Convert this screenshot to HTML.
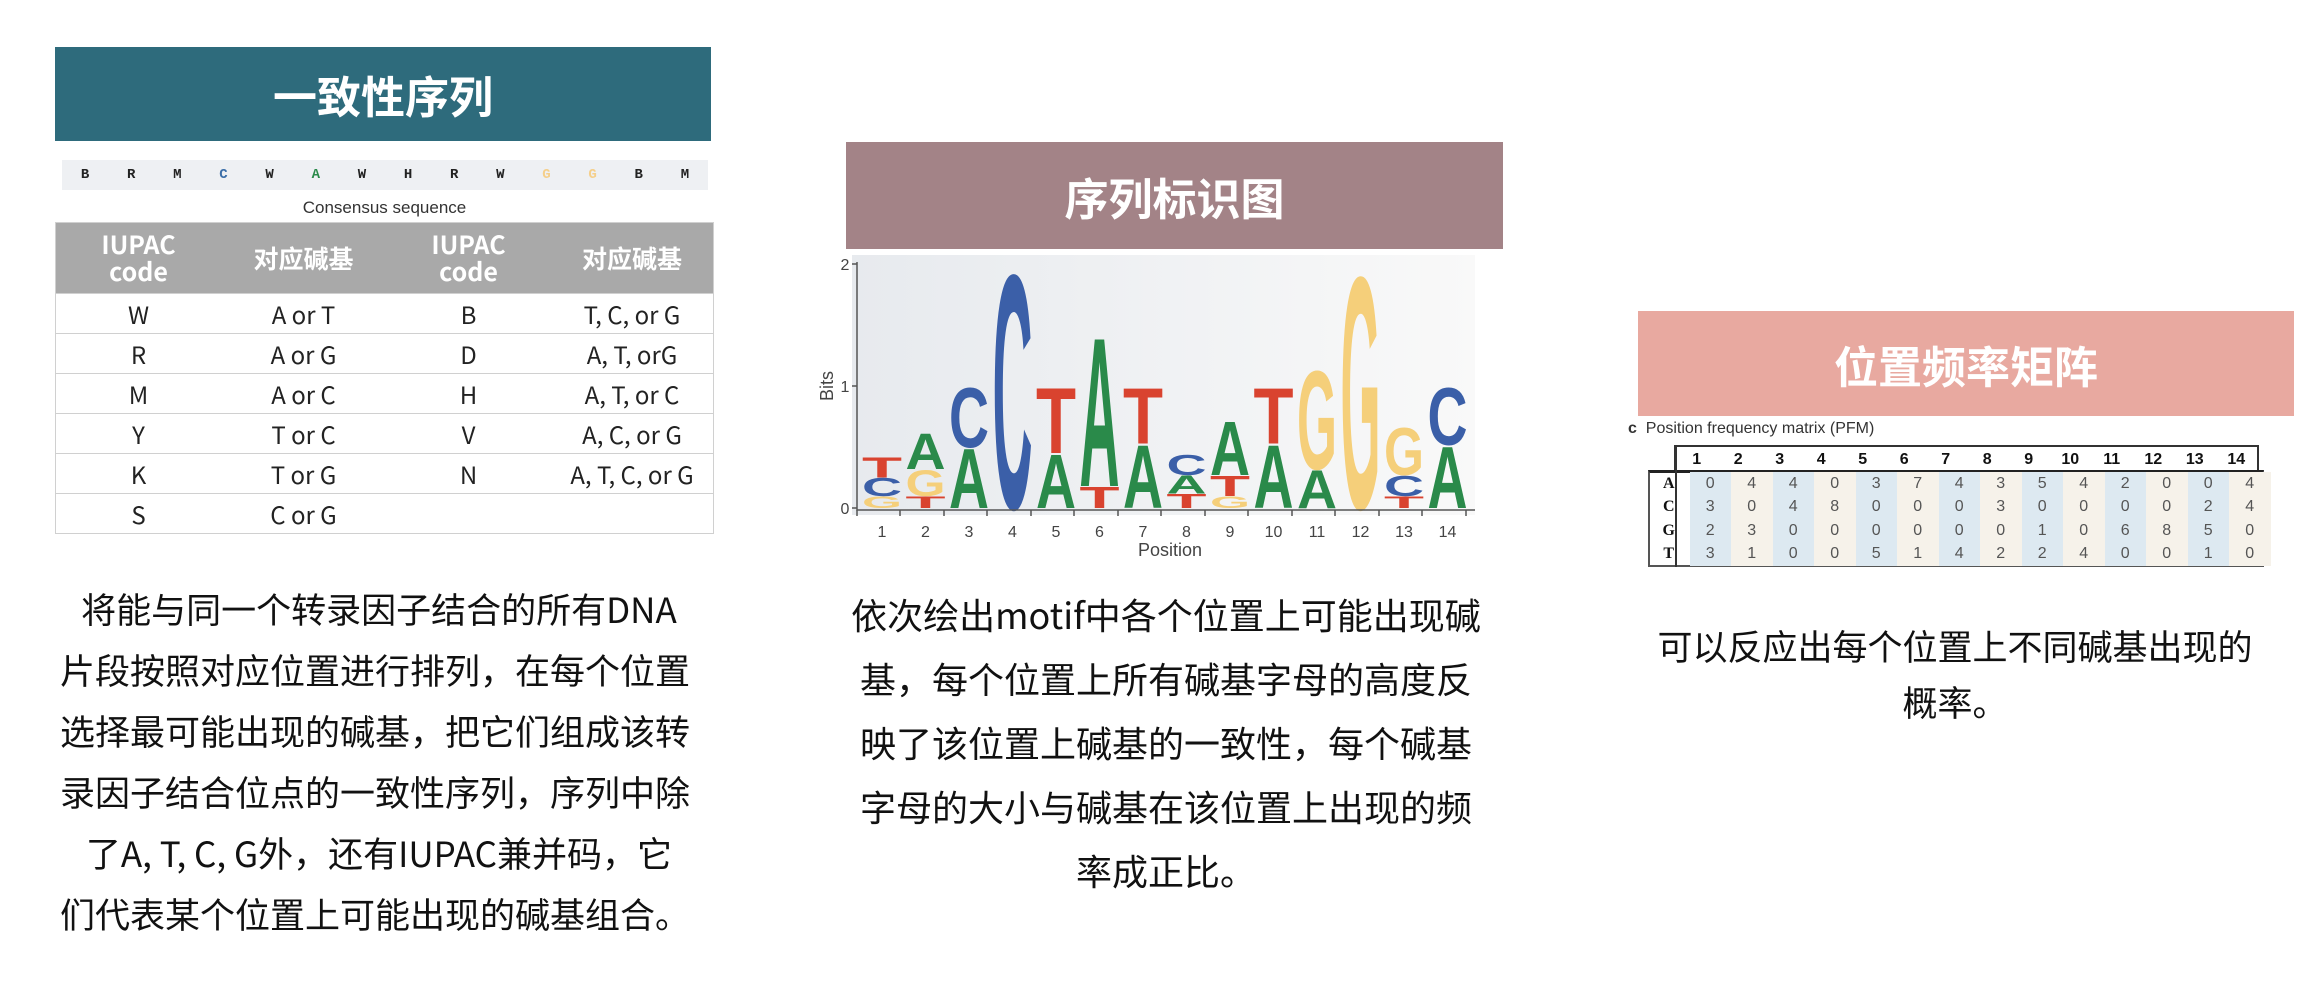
<!DOCTYPE html>
<html><head><meta charset="utf-8"><style>
body{margin:0;width:2324px;height:986px;background:#fff;position:relative;overflow:hidden;font-family:"Liberation Sans","Noto Sans CJK SC",sans-serif;}
.abs{position:absolute;}
.hdr{position:absolute;color:#fff;font-weight:bold;font-size:44px;display:flex;align-items:center;justify-content:center;font-family:"Noto Sans CJK SC",sans-serif;}
.para{position:absolute;font-family:"Noto Sans CJK SC",sans-serif;font-size:36px;color:#111;text-align:center;white-space:nowrap;}
table.iu{position:absolute;left:55px;top:222px;width:659px;border-collapse:collapse;font-family:"Noto Sans CJK SC",sans-serif;}
table.iu th{background:#a9a9a9;color:#fff;font-weight:bold;font-size:25px;line-height:27px;height:70px;padding:0;}
table.iu td{height:39px;border:1px solid #d0d0d0;border-left:none;border-right:none;font-size:24px;text-align:center;color:#222;padding:0;}
table.iu{border:1px solid #d0d0d0;}
table.pfm{position:absolute;left:1648px;top:445px;border-collapse:collapse;font-family:"Liberation Sans",sans-serif;}
table.pfm td{width:41.5px;height:23.5px;text-align:center;font-size:16px;color:#555;padding:0;}
table.pfm tr.h td{font-weight:bold;color:#111;height:25px;}
</style></head><body>

<div class="hdr" style="left:55px;top:47px;width:656px;height:94px;background:#2e6b7c;">一致性序列</div>
<div class="abs" style="left:62px;top:160px;width:646px;height:30px;background:#eef0f3;font-family:'Liberation Mono',monospace;font-weight:bold;font-size:14px;line-height:30px;display:flex;justify-content:space-around;color:#222;">
<span>B</span><span>R</span><span>M</span><span style="color:#3b6ea8">C</span><span>W</span><span style="color:#2a8a4a">A</span><span>W</span><span>H</span><span>R</span><span>W</span><span style="color:#f5cf8a">G</span><span style="color:#f5cf8a">G</span><span>B</span><span>M</span></div>
<div class="abs" style="left:55px;width:659px;top:198px;text-align:center;font-size:17px;color:#333;">Consensus sequence</div>
<table class="iu">
<tr><th style="width:165px">IUPAC<br>code</th><th style="width:165px">对应碱基</th><th style="width:165px">IUPAC<br>code</th><th>对应碱基</th></tr>
<tr><td>W</td><td>A or T</td><td>B</td><td>T, C, or G</td></tr>
<tr><td>R</td><td>A or G</td><td>D</td><td>A, T, orG</td></tr>
<tr><td>M</td><td>A or C</td><td>H</td><td>A, T, or C</td></tr>
<tr><td>Y</td><td>T or C</td><td>V</td><td>A, C, or G</td></tr>
<tr><td>K</td><td>T or G</td><td>N</td><td>A, T, C, or G</td></tr>
<tr><td>S</td><td>C or G</td><td></td><td></td></tr>
</table>
<div class="para" style="left:40px;width:670px;top:578px;line-height:61px;font-size:35px;">&nbsp;将能与同一个转录因子结合的所有DNA<br>片段按照对应位置进行排列，在每个位置<br>选择最可能出现的碱基，把它们组成该转<br>录因子结合位点的一致性序列，序列中除<br>&nbsp;了A, T, C, G外，还有IUPAC兼并码，它<br>们代表某个位置上可能出现的碱基组合。</div>

<div class="hdr" style="left:846px;top:142px;width:657px;height:107px;background:#a38387;">序列标识图</div>
<svg class="abs" style="left:0;top:0" width="2324" height="986" font-family="Liberation Sans, sans-serif">
<defs><linearGradient id="bg" x1="0" x2="1"><stop offset="0" stop-color="#e7eaee"/><stop offset="1" stop-color="#f9f9f9"/></linearGradient></defs>
<rect x="852" y="255" width="623" height="260" fill="url(#bg)"/>
<g font-weight="bold" font-size="100">
<text fill="#f5cf7a" textLength="40" lengthAdjust="spacingAndGlyphs" transform="translate(862 508) scale(1 0.17)">G</text>
<text fill="#3b5fa8" textLength="40" lengthAdjust="spacingAndGlyphs" transform="translate(862 495.8) scale(1 0.256)">C</text>
<text fill="#d9432f" textLength="40" lengthAdjust="spacingAndGlyphs" transform="translate(862 477.5) scale(1 0.289)">T</text>

<text fill="#d9432f" textLength="40" lengthAdjust="spacingAndGlyphs" transform="translate(905.5 508) scale(1 0.17)">T</text>
<text fill="#f5cf7a" textLength="40" lengthAdjust="spacingAndGlyphs" transform="translate(905.5 495.8) scale(1 0.374)">G</text>
<text fill="#2a8a4a" textLength="40" lengthAdjust="spacingAndGlyphs" transform="translate(905.5 469) scale(1 0.511)">A</text>

<text fill="#2a8a4a" textLength="40" lengthAdjust="spacingAndGlyphs" transform="translate(949 508) scale(1 0.852)">A</text>
<text fill="#3b5fa8" textLength="40" lengthAdjust="spacingAndGlyphs" transform="translate(949 447) scale(1 0.852)">C</text>

<text fill="#3b5fa8" textLength="40" lengthAdjust="spacingAndGlyphs" transform="translate(992.5 508) scale(1 3.35)">C</text>

<text fill="#2a8a4a" textLength="40" lengthAdjust="spacingAndGlyphs" transform="translate(1036 508) scale(1 0.768)">A</text>
<text fill="#d9432f" textLength="40" lengthAdjust="spacingAndGlyphs" transform="translate(1036 453) scale(1 0.936)">T</text>

<text fill="#d9432f" textLength="40" lengthAdjust="spacingAndGlyphs" transform="translate(1079.5 508) scale(1 0.307)">T</text>
<text fill="#2a8a4a" textLength="40" lengthAdjust="spacingAndGlyphs" transform="translate(1079.5 486) scale(1 2.13)">A</text>

<text fill="#2a8a4a" textLength="40" lengthAdjust="spacingAndGlyphs" transform="translate(1123 508) scale(1 0.904)">A</text>
<text fill="#d9432f" textLength="40" lengthAdjust="spacingAndGlyphs" transform="translate(1123 443.3) scale(1 0.8)">T</text>

<text fill="#d9432f" textLength="40" lengthAdjust="spacingAndGlyphs" transform="translate(1166.5 508) scale(1 0.204)">T</text>
<text fill="#2a8a4a" textLength="40" lengthAdjust="spacingAndGlyphs" transform="translate(1166.5 493.4) scale(1 0.256)">A</text>
<text fill="#3b5fa8" textLength="40" lengthAdjust="spacingAndGlyphs" transform="translate(1166.5 475.1) scale(1 0.289)">C</text>

<text fill="#f5cf7a" textLength="40" lengthAdjust="spacingAndGlyphs" transform="translate(1210 508) scale(1 0.17)">G</text>
<text fill="#d9432f" textLength="40" lengthAdjust="spacingAndGlyphs" transform="translate(1210 495.8) scale(1 0.289)">T</text>
<text fill="#2a8a4a" textLength="40" lengthAdjust="spacingAndGlyphs" transform="translate(1210 475.1) scale(1 0.768)">A</text>

<text fill="#2a8a4a" textLength="40" lengthAdjust="spacingAndGlyphs" transform="translate(1253.5 508) scale(1 0.904)">A</text>
<text fill="#d9432f" textLength="40" lengthAdjust="spacingAndGlyphs" transform="translate(1253.5 443.3) scale(1 0.8)">T</text>

<text fill="#2a8a4a" textLength="40" lengthAdjust="spacingAndGlyphs" transform="translate(1297 508) scale(1 0.545)">A</text>
<text fill="#f5cf7a" textLength="40" lengthAdjust="spacingAndGlyphs" transform="translate(1297 469) scale(1 1.41)">G</text>

<text fill="#f5cf7a" textLength="40" lengthAdjust="spacingAndGlyphs" transform="translate(1340.5 508) scale(1 3.32)">G</text>

<text fill="#d9432f" textLength="40" lengthAdjust="spacingAndGlyphs" transform="translate(1384 508) scale(1 0.17)">T</text>
<text fill="#3b5fa8" textLength="40" lengthAdjust="spacingAndGlyphs" transform="translate(1384 495.8) scale(1 0.289)">C</text>
<text fill="#f5cf7a" textLength="40" lengthAdjust="spacingAndGlyphs" transform="translate(1384 475.1) scale(1 0.68)">G</text>

<text fill="#2a8a4a" textLength="40" lengthAdjust="spacingAndGlyphs" transform="translate(1427.5 508) scale(1 0.885)">A</text>
<text fill="#3b5fa8" textLength="40" lengthAdjust="spacingAndGlyphs" transform="translate(1427.5 444.6) scale(1 0.818)">C</text>
</g>
<g stroke="#555" stroke-width="1.5" fill="none">
<path d="M857 262V510H1475M852 264H857M852 386H857M852 508H857"/>
<path d="M857 510v6M900 510v6M944 510v6M987 510v6M1031 510v6M1074 510v6M1118 510v6M1161 510v6M1205 510v6M1248 510v6M1292 510v6M1335 510v6M1379 510v6M1422 510v6M1466 510v6"/>
</g>
<g fill="#444" font-size="16" text-anchor="middle">
<text x="845" y="270">2</text><text x="845" y="392">1</text><text x="845" y="514">0</text>
<text x="882" y="537">1</text><text x="925.5" y="537">2</text><text x="969" y="537">3</text><text x="1012.5" y="537">4</text><text x="1056" y="537">5</text><text x="1099.5" y="537">6</text><text x="1143" y="537">7</text><text x="1186.5" y="537">8</text><text x="1230" y="537">9</text><text x="1273.5" y="537">10</text><text x="1317" y="537">11</text><text x="1360.5" y="537">12</text><text x="1404" y="537">13</text><text x="1447.5" y="537">14</text>
<text x="1170" y="556" font-size="18">Position</text>
<text transform="translate(833 386) rotate(-90)" font-size="18">Bits</text>
</g>
</svg>
<div class="para" style="left:846px;width:640px;top:582px;line-height:64px;">依次绘出motif中各个位置上可能出现碱<br>基，每个位置上所有碱基字母的高度反<br>映了该位置上碱基的一致性，每个碱基<br>字母的大小与碱基在该位置上出现的频<br>率成正比。</div>

<div class="hdr" style="left:1638px;top:311px;width:656px;height:105px;background:#e8a9a0;">位置频率矩阵</div>
<div class="abs" style="left:1628px;top:420px;font-size:16px;color:#333;"><b>c</b>&nbsp;&nbsp;Position frequency matrix (PFM)</div>
<table class="pfm">
<tr class="h"><td style="width:26px"></td><td style="border-top:2px solid #333;border-left:2px solid #333;">1</td><td style="border-top:2px solid #333">2</td><td style="border-top:2px solid #333">3</td><td style="border-top:2px solid #333">4</td><td style="border-top:2px solid #333">5</td><td style="border-top:2px solid #333">6</td><td style="border-top:2px solid #333">7</td><td style="border-top:2px solid #333">8</td><td style="border-top:2px solid #333">9</td><td style="border-top:2px solid #333">10</td><td style="border-top:2px solid #333">11</td><td style="border-top:2px solid #333">12</td><td style="border-top:2px solid #333">13</td><td style="border-top:2px solid #333;border-right:2px solid #333">14</td></tr>
</table>
<div class="abs" style="left:1648px;top:470px;width:616px;height:97px;border:2px solid #555;border-top:3px solid #222;box-sizing:border-box;"></div>
<table class="pfm" style="top:472px;">
<tr><td style="width:26px;font-family:'Liberation Serif',serif;font-weight:bold;color:#111">A</td><td style="background:#dde9f1">0</td><td style="background:#f6f2ea">4</td><td style="background:#dde9f1">4</td><td style="background:#f6f2ea">0</td><td style="background:#dde9f1">3</td><td style="background:#f6f2ea">7</td><td style="background:#dde9f1">4</td><td style="background:#f6f2ea">3</td><td style="background:#dde9f1">5</td><td style="background:#f6f2ea">4</td><td style="background:#dde9f1">2</td><td style="background:#f6f2ea">0</td><td style="background:#dde9f1">0</td><td style="background:#f6f2ea">4</td></tr>
<tr><td style="font-family:'Liberation Serif',serif;font-weight:bold;color:#111">C</td><td style="background:#dde9f1">3</td><td style="background:#f6f2ea">0</td><td style="background:#dde9f1">4</td><td style="background:#f6f2ea">8</td><td style="background:#dde9f1">0</td><td style="background:#f6f2ea">0</td><td style="background:#dde9f1">0</td><td style="background:#f6f2ea">3</td><td style="background:#dde9f1">0</td><td style="background:#f6f2ea">0</td><td style="background:#dde9f1">0</td><td style="background:#f6f2ea">0</td><td style="background:#dde9f1">2</td><td style="background:#f6f2ea">4</td></tr>
<tr><td style="font-family:'Liberation Serif',serif;font-weight:bold;color:#111">G</td><td style="background:#dde9f1">2</td><td style="background:#f6f2ea">3</td><td style="background:#dde9f1">0</td><td style="background:#f6f2ea">0</td><td style="background:#dde9f1">0</td><td style="background:#f6f2ea">0</td><td style="background:#dde9f1">0</td><td style="background:#f6f2ea">0</td><td style="background:#dde9f1">1</td><td style="background:#f6f2ea">0</td><td style="background:#dde9f1">6</td><td style="background:#f6f2ea">8</td><td style="background:#dde9f1">5</td><td style="background:#f6f2ea">0</td></tr>
<tr><td style="font-family:'Liberation Serif',serif;font-weight:bold;color:#111">T</td><td style="background:#dde9f1">3</td><td style="background:#f6f2ea">1</td><td style="background:#dde9f1">0</td><td style="background:#f6f2ea">0</td><td style="background:#dde9f1">5</td><td style="background:#f6f2ea">1</td><td style="background:#dde9f1">4</td><td style="background:#f6f2ea">2</td><td style="background:#dde9f1">2</td><td style="background:#f6f2ea">4</td><td style="background:#dde9f1">0</td><td style="background:#f6f2ea">0</td><td style="background:#dde9f1">1</td><td style="background:#f6f2ea">0</td></tr>
</table>
<div class="abs" style="left:1675px;top:445px;width:2px;height:122px;background:#333;"></div>
<div class="para" style="left:1640px;width:630px;top:618px;line-height:56px;font-size:35px;">可以反应出每个位置上不同碱基出现的<br>概率。</div>
</body></html>
